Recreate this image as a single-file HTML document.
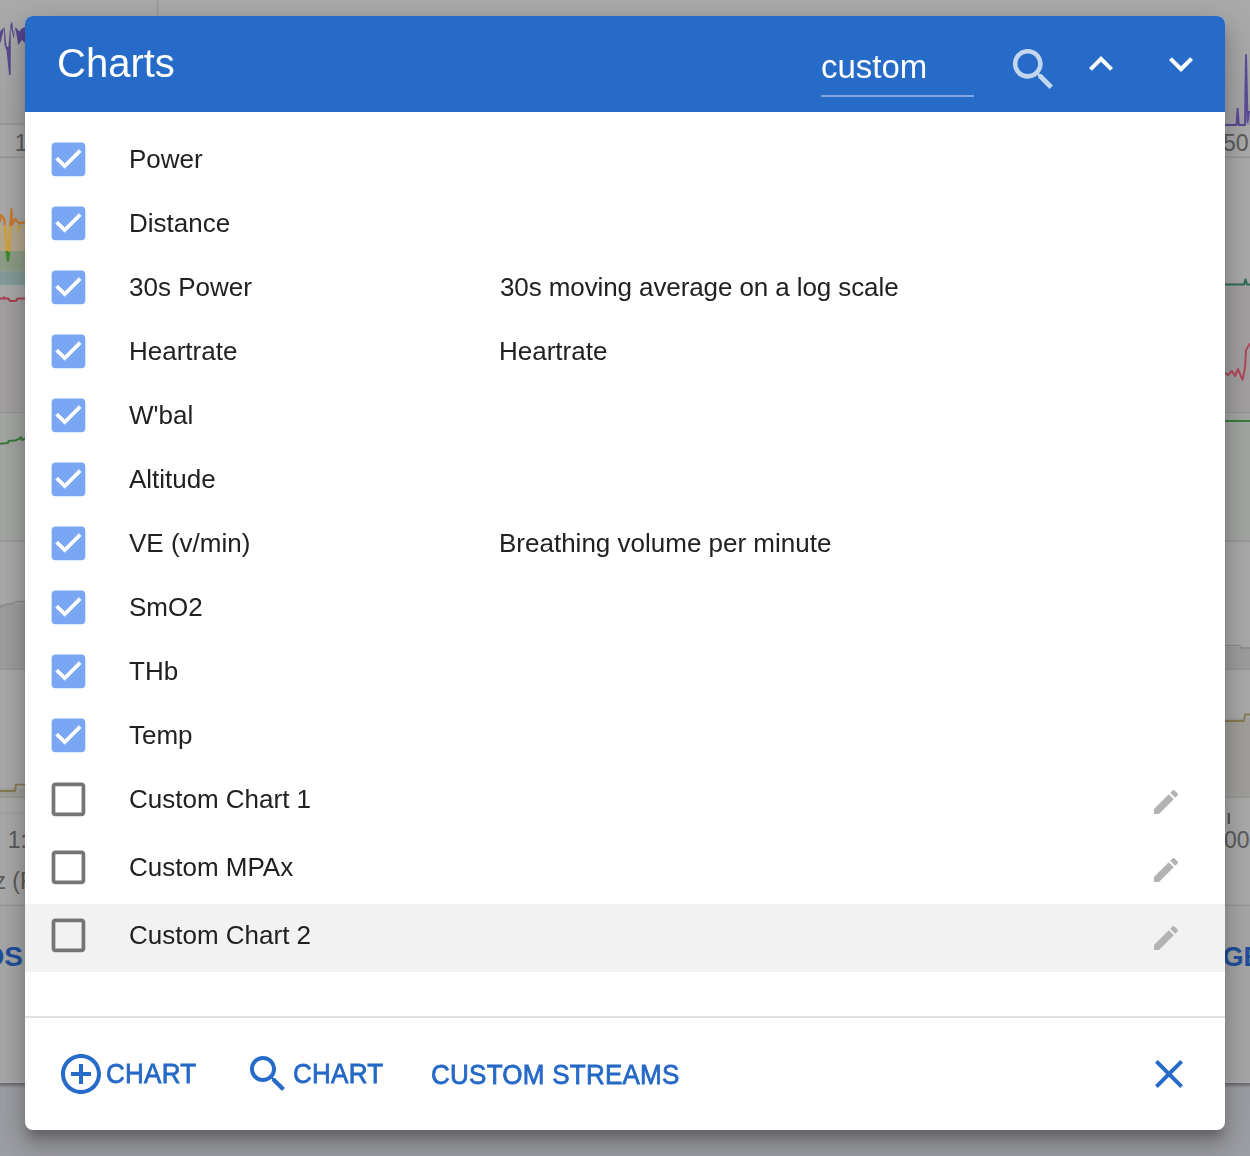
<!DOCTYPE html>
<html><head><meta charset="utf-8">
<style>
html,body{margin:0;padding:0;}
body{width:1250px;height:1156px;overflow:hidden;position:relative;background:#a8a8a8;font-family:"Liberation Sans",sans-serif;}
.a{position:absolute;}
.t{position:absolute;white-space:pre;line-height:1;will-change:transform;}
#dlg{position:absolute;left:25px;top:16px;width:1200px;height:1114px;background:#fff;border-radius:8px;overflow:hidden;
 box-shadow:0 10px 10px -4px rgba(0,0,0,.2),0 16px 20px 2px rgba(0,0,0,.14),0 6px 28px 4px rgba(0,0,0,.12);}
#hdr{position:absolute;left:0;top:0;width:1200px;height:96px;background:#256bc7;}
.lbl{font-size:26px;color:#212121;}
</style></head>
<body>
<div id="bg" class="a" style="left:0;top:0;width:1250px;height:1156px;"><svg class="a" style="left:0;top:0" width="1250" height="1156" viewBox="0 0 1250 1156"><rect x="0" y="0" width="1250" height="1156" fill="#a8a8a8"/><defs><linearGradient id="tg" x1="0" y1="0" x2="0" y2="1"><stop offset="0" stop-color="#aaaaaa"/><stop offset="1" stop-color="#a3a3a5"/></linearGradient></defs><rect x="0" y="0" width="1250" height="124" fill="url(#tg)"/><rect x="0" y="123.5" width="1250" height="1.5" fill="#959595"/><rect x="0" y="156.5" width="1250" height="1.5" fill="#959595"/><rect x="0" y="299" width="25" height="113" fill="#a29fa0"/><rect x="1225" y="286" width="25" height="126" fill="#a29fa0"/><rect x="0" y="412" width="1250" height="1.5" fill="#959595"/><rect x="0" y="413" width="1250" height="128" fill="#a2a5a2"/><rect x="0" y="540.5" width="1250" height="1.5" fill="#959595"/><rect x="0" y="604" width="30" height="65" fill="#9d9d9d"/><rect x="1220" y="647" width="30" height="22" fill="#9d9d9d"/><rect x="0" y="668.5" width="1250" height="1.5" fill="#959595"/><rect x="0" y="788" width="30" height="9" fill="#a09e9b"/><rect x="1220" y="718" width="30" height="79" fill="#a09e9b"/><rect x="0" y="796.5" width="1250" height="1.5" fill="#959595"/><rect x="0" y="812.5" width="25" height="1" fill="#9a9a9a"/><rect x="0" y="905" width="1250" height="178" fill="#a5a5a5"/><rect x="0" y="904.5" width="1250" height="1.5" fill="#979797"/><rect x="0" y="1081.5" width="1250" height="1.5" fill="#adadad"/><rect x="0" y="1083" width="1250" height="80" fill="#9c9da2"/><defs><linearGradient id="bb" x1="0" y1="0" x2="0" y2="1"><stop offset="0" stop-color="#000" stop-opacity=".35"/><stop offset="1" stop-color="#000" stop-opacity="0"/></linearGradient></defs><rect x="0" y="1083" width="1250" height="5" fill="url(#bb)"/><rect x="0" y="225" width="25" height="26" fill="#b3a78f"/><rect x="0" y="251" width="25" height="20.5" fill="#8d9c85"/><rect x="0" y="271.5" width="25" height="13.5" fill="#839b98"/><polygon fill="#58478f" points="0,32.1 1.3,30.1 4.5,27.2 6.5,46.4 8.4,47 10.4,24.9 12,21 13.6,34.7 15.6,27.2 19.5,31.4 21.4,28.8 25,26.9 25,43.1 22.1,39.9 18.2,45.1 15.6,28.8 13.6,38.6 10.7,26.2 10.7,74.9 9.1,74.9 6.5,50.3 4.5,45.1 3.9,28.8 0.6,42.5 0,42.5"/><polyline fill="none" stroke="#5b4a95" stroke-width="2" stroke-linejoin="round" points="1225,125 1236.5,125 1237.6,108.8 1238.8,125 1245,125 1246,55 1247.5,122 1249,112 1250,112"/><polyline fill="none" stroke="#c9782b" stroke-width="2.2" stroke-linejoin="round" points="0,221.8 1.2,215 4.2,218.8 4.8,225.5"/><polyline fill="none" stroke="#d2a12f" stroke-width="2.2" stroke-linejoin="round" points="4.8,225.5 6.1,243 6.7,251"/><polyline fill="none" stroke="#3a8a2c" stroke-width="2.4" stroke-linejoin="round" points="6.7,251 7.9,260.6 9.1,251.5"/><polyline fill="none" stroke="#d2a12f" stroke-width="2.2" stroke-linejoin="round" points="9.1,251.5 10.3,226"/><polyline fill="none" stroke="#c9782b" stroke-width="2.2" stroke-linejoin="round" points="10.3,226 11.5,209 12.1,225 15.2,218.8 18.2,222.4 20.6,223.6 25,221.8"/><polygon fill="#c9a040" points="17,225.5 21,225.5 17.5,234"/><polyline fill="none" stroke="#a8404f" stroke-width="2" stroke-linejoin="round" points="0,298.6 3,298.6 4,297.3 5,298.6 8.5,298.6 10,301 16,301 17.5,298.6 25,298.6"/><polyline fill="none" stroke="#b0485a" stroke-width="2" stroke-linejoin="round" points="1225,372.8 1228,375 1232,371 1235,376 1238,369 1240,374 1242.5,379.8 1245,368 1246,350 1250,343.4"/><polyline fill="none" stroke="#2e6b52" stroke-width="2" stroke-linejoin="round" points="1225,284.6 1244,284.6 1245.5,279.4 1247,284.6 1250,284.6"/><polyline fill="none" stroke="#3c7a3c" stroke-width="2" stroke-linejoin="round" points="0,443.7 8,443 8.5,441 15,440.5 19,439 21,437 22,440 25,438.7"/><polyline fill="none" stroke="#3c7a3c" stroke-width="2" stroke-linejoin="round" points="1225,421 1250,421"/><polyline fill="none" stroke="#8b8b8b" stroke-width="1.5" stroke-linejoin="round" points="0,607 4,606 6,604.5 12,603.5 16,602 25,601.6"/><polyline fill="none" stroke="#8b8b8b" stroke-width="1.5" stroke-linejoin="round" points="1225,645.4 1240,645.4 1241,648 1250,648"/><polyline fill="none" stroke="#857a52" stroke-width="1.8" stroke-linejoin="round" points="0,791 15,791 16,784.7 25,784.7"/><polyline fill="none" stroke="#857a52" stroke-width="1.8" stroke-linejoin="round" points="1225,721 1244,721 1245,714.5 1250,714.5"/><text x="27.5" y="151" font-family="Liberation Sans" font-size="23" font-weight="400" fill="#5a5a5a" text-anchor="end">1</text><text x="1223" y="151" font-family="Liberation Sans" font-size="23" font-weight="400" fill="#5a5a5a" text-anchor="start">50</text><text x="27" y="848" font-family="Liberation Sans" font-size="23" font-weight="400" fill="#5a5a5a" text-anchor="end">1:</text><text x="1224" y="848" font-family="Liberation Sans" font-size="23" font-weight="400" fill="#5a5a5a" text-anchor="start">00</text><rect x="1227.6" y="813" width="2.4" height="11" fill="#5a5a5a"/><text x="34" y="889" font-family="Liberation Sans" font-size="23" font-weight="400" fill="#5a5a5a" text-anchor="end">z (F</text><rect x="156.8" y="0" width="1.5" height="16" fill="#979797"/><text x="23" y="966" font-family="Liberation Sans" font-size="28" font-weight="700" fill="#1f4f9a" text-anchor="end">OS</text><text x="1222.5" y="966" font-family="Liberation Sans" font-size="27" font-weight="700" fill="#1f4f9a" text-anchor="start">GE</text></svg></div>

<div id="dlg">
 <div id="hdr">
  <div class="t" style="left:32px;top:27.2px;font-size:40px;color:#fff;">Charts</div>
  <div class="t" style="left:796px;top:34.3px;font-size:33px;color:#fff;">custom</div>
  <div class="a" style="left:796px;top:79px;width:153px;height:2px;background:#7ea5e0;"></div>
  <svg class="a" style="left:981px;top:26px;" width="55" height="55" viewBox="0 0 24 24"><path fill="#c4d6ee" d="M15.5 14h-.79l-.28-.27C15.41 12.59 16 11.11 16 9.5 16 5.91 13.09 3 9.5 3S3 5.91 3 9.5 5.91 16 9.5 16c1.61 0 3.09-.59 4.23-1.57l.27.28v.79l5 4.99L20.49 19l-4.99-5zm-6 0C7.01 14 5 11.99 5 9.5S7.01 5 9.5 5 14 7.01 14 9.5 11.99 14 9.5 14z"/></svg>
  <svg class="a" style="left:1052px;top:24px;" width="48" height="48" viewBox="0 0 24 24"><path fill="#fff" d="M12 8l-6 6 1.41 1.41L12 10.83l4.59 4.58L18 14z"/></svg>
  <svg class="a" style="left:1132px;top:24px;" width="48" height="48" viewBox="0 0 24 24"><path fill="#fff" d="M16.59 8.59L12 13.17 7.41 8.59 6 10l6 6 6-6z"/></svg>
 </div>
 <!--LIST-->
<div class="a" style="left:0;top:888px;width:1200px;height:68px;background:#f2f2f2;"></div>
<svg class="a" style="left:21.1px;top:120.68px;" width="44.93" height="44.93" viewBox="0 0 24 24"><path fill="#7aa7f4" d="M19 3H5c-1.11 0-2 .9-2 2v14c0 1.1.89 2 2 2h14c1.11 0 2-.9 2-2V5c0-1.1-.89-2-2-2zm-9 14l-5-5 1.41-1.41L10 14.17l7.59-7.59L19 8l-9 9z"/></svg>
<div class="t lbl" style="left:104px;top:130px;">Power</div>
<svg class="a" style="left:21.1px;top:184.68px;" width="44.93" height="44.93" viewBox="0 0 24 24"><path fill="#7aa7f4" d="M19 3H5c-1.11 0-2 .9-2 2v14c0 1.1.89 2 2 2h14c1.11 0 2-.9 2-2V5c0-1.1-.89-2-2-2zm-9 14l-5-5 1.41-1.41L10 14.17l7.59-7.59L19 8l-9 9z"/></svg>
<div class="t lbl" style="left:104px;top:194px;">Distance</div>
<svg class="a" style="left:21.1px;top:248.68px;" width="44.93" height="44.93" viewBox="0 0 24 24"><path fill="#7aa7f4" d="M19 3H5c-1.11 0-2 .9-2 2v14c0 1.1.89 2 2 2h14c1.11 0 2-.9 2-2V5c0-1.1-.89-2-2-2zm-9 14l-5-5 1.41-1.41L10 14.17l7.59-7.59L19 8l-9 9z"/></svg>
<div class="t lbl" style="left:104px;top:258px;">30s Power</div>
<div class="t lbl" style="left:475px;top:258px;letter-spacing:-0.1px;">30s moving average on a log scale</div>
<svg class="a" style="left:21.1px;top:312.68px;" width="44.93" height="44.93" viewBox="0 0 24 24"><path fill="#7aa7f4" d="M19 3H5c-1.11 0-2 .9-2 2v14c0 1.1.89 2 2 2h14c1.11 0 2-.9 2-2V5c0-1.1-.89-2-2-2zm-9 14l-5-5 1.41-1.41L10 14.17l7.59-7.59L19 8l-9 9z"/></svg>
<div class="t lbl" style="left:104px;top:322px;">Heartrate</div>
<div class="t lbl" style="left:474px;top:322px;">Heartrate</div>
<svg class="a" style="left:21.1px;top:376.68px;" width="44.93" height="44.93" viewBox="0 0 24 24"><path fill="#7aa7f4" d="M19 3H5c-1.11 0-2 .9-2 2v14c0 1.1.89 2 2 2h14c1.11 0 2-.9 2-2V5c0-1.1-.89-2-2-2zm-9 14l-5-5 1.41-1.41L10 14.17l7.59-7.59L19 8l-9 9z"/></svg>
<div class="t lbl" style="left:104px;top:386px;">W'bal</div>
<svg class="a" style="left:21.1px;top:440.68px;" width="44.93" height="44.93" viewBox="0 0 24 24"><path fill="#7aa7f4" d="M19 3H5c-1.11 0-2 .9-2 2v14c0 1.1.89 2 2 2h14c1.11 0 2-.9 2-2V5c0-1.1-.89-2-2-2zm-9 14l-5-5 1.41-1.41L10 14.17l7.59-7.59L19 8l-9 9z"/></svg>
<div class="t lbl" style="left:104px;top:450px;">Altitude</div>
<svg class="a" style="left:21.1px;top:504.68px;" width="44.93" height="44.93" viewBox="0 0 24 24"><path fill="#7aa7f4" d="M19 3H5c-1.11 0-2 .9-2 2v14c0 1.1.89 2 2 2h14c1.11 0 2-.9 2-2V5c0-1.1-.89-2-2-2zm-9 14l-5-5 1.41-1.41L10 14.17l7.59-7.59L19 8l-9 9z"/></svg>
<div class="t lbl" style="left:104px;top:514px;">VE (v/min)</div>
<div class="t lbl" style="left:474px;top:514px;">Breathing volume per minute</div>
<svg class="a" style="left:21.1px;top:568.68px;" width="44.93" height="44.93" viewBox="0 0 24 24"><path fill="#7aa7f4" d="M19 3H5c-1.11 0-2 .9-2 2v14c0 1.1.89 2 2 2h14c1.11 0 2-.9 2-2V5c0-1.1-.89-2-2-2zm-9 14l-5-5 1.41-1.41L10 14.17l7.59-7.59L19 8l-9 9z"/></svg>
<div class="t lbl" style="left:104px;top:578px;">SmO2</div>
<svg class="a" style="left:21.1px;top:632.68px;" width="44.93" height="44.93" viewBox="0 0 24 24"><path fill="#7aa7f4" d="M19 3H5c-1.11 0-2 .9-2 2v14c0 1.1.89 2 2 2h14c1.11 0 2-.9 2-2V5c0-1.1-.89-2-2-2zm-9 14l-5-5 1.41-1.41L10 14.17l7.59-7.59L19 8l-9 9z"/></svg>
<div class="t lbl" style="left:104px;top:642px;">THb</div>
<svg class="a" style="left:21.1px;top:696.68px;" width="44.93" height="44.93" viewBox="0 0 24 24"><path fill="#7aa7f4" d="M19 3H5c-1.11 0-2 .9-2 2v14c0 1.1.89 2 2 2h14c1.11 0 2-.9 2-2V5c0-1.1-.89-2-2-2zm-9 14l-5-5 1.41-1.41L10 14.17l7.59-7.59L19 8l-9 9z"/></svg>
<div class="t lbl" style="left:104px;top:706px;">Temp</div>
<svg class="a" style="left:21.1px;top:760.9px;" width="44.93" height="44.93" viewBox="0 0 24 24"><path fill="#757575" d="M19 5v14H5V5h14m0-2H5c-1.1 0-2 .9-2 2v14c0 1.1.9 2 2 2h14c1.1 0 2-.9 2-2V5c0-1.1-.9-2-2-2z"/></svg>
<div class="t lbl" style="left:104px;top:769.7px;">Custom Chart 1</div>
<svg class="a" style="left:1125px;top:769.7px;" width="32" height="32" viewBox="0 0 24 24"><path fill="#b3b3b3" d="M3 17.25V21h3.75L17.81 9.94l-3.75-3.75L3 17.25zM20.71 7.04c.39-.39.39-1.02 0-1.41l-2.34-2.34c-.39-.39-1.02-.39-1.41 0l-1.83 1.83 3.75 3.75 1.83-1.83z"/></svg>
<svg class="a" style="left:21.1px;top:828.9px;" width="44.93" height="44.93" viewBox="0 0 24 24"><path fill="#757575" d="M19 5v14H5V5h14m0-2H5c-1.1 0-2 .9-2 2v14c0 1.1.9 2 2 2h14c1.1 0 2-.9 2-2V5c0-1.1-.9-2-2-2z"/></svg>
<div class="t lbl" style="left:104px;top:837.7px;">Custom MPAx</div>
<svg class="a" style="left:1125px;top:837.7px;" width="32" height="32" viewBox="0 0 24 24"><path fill="#b3b3b3" d="M3 17.25V21h3.75L17.81 9.94l-3.75-3.75L3 17.25zM20.71 7.04c.39-.39.39-1.02 0-1.41l-2.34-2.34c-.39-.39-1.02-.39-1.41 0l-1.83 1.83 3.75 3.75 1.83-1.83z"/></svg>
<svg class="a" style="left:21.1px;top:896.9px;" width="44.93" height="44.93" viewBox="0 0 24 24"><path fill="#757575" d="M19 5v14H5V5h14m0-2H5c-1.1 0-2 .9-2 2v14c0 1.1.9 2 2 2h14c1.1 0 2-.9 2-2V5c0-1.1-.9-2-2-2z"/></svg>
<div class="t lbl" style="left:104px;top:905.7px;">Custom Chart 2</div>
<svg class="a" style="left:1125px;top:905.7px;" width="32" height="32" viewBox="0 0 24 24"><path fill="#b3b3b3" d="M3 17.25V21h3.75L17.81 9.94l-3.75-3.75L3 17.25zM20.71 7.04c.39-.39.39-1.02 0-1.41l-2.34-2.34c-.39-.39-1.02-.39-1.41 0l-1.83 1.83 3.75 3.75 1.83-1.83z"/></svg>
<!--/LIST-->
 <div class="a" style="left:0;top:1000px;width:1200px;height:2px;background:#e0e0e0;"></div>
 <svg class="a" style="left:32px;top:1034px;" width="48" height="48" viewBox="0 0 24 24"><path fill="#256bc7" d="M13 7h-2v4H7v2h4v4h2v-4h4v-2h-4V7zm-1-5C6.48 2 2 6.48 2 12s4.48 10 10 10 10-4.48 10-10S17.52 2 12 2zm0 18c-4.41 0-8-3.59-8-8s3.59-8 8-8 8 3.59 8 8-3.59 8-8 8z"/></svg>
 <div class="t" style="left:80.7px;top:1044.9px;font-size:26px;font-weight:400;color:#2568c6;-webkit-text-stroke:0.75px #2568c6;letter-spacing:0.25px;transform:scaleY(1.06);transform-origin:0 22px;">CHART</div>
 <svg class="a" style="left:219px;top:1034px;" width="48" height="48" viewBox="0 0 24 24"><path fill="#256bc7" d="M15.5 14h-.79l-.28-.27C15.41 12.59 16 11.11 16 9.5 16 5.91 13.09 3 9.5 3S3 5.91 3 9.5 5.91 16 9.5 16c1.61 0 3.09-.59 4.23-1.57l.27.28v.79l5 4.99L20.49 19l-4.99-5zm-6 0C7.01 14 5 11.99 5 9.5S7.01 5 9.5 5 14 7.01 14 9.5 11.99 14 9.5 14z"/></svg>
 <div class="t" style="left:267.8px;top:1044.9px;font-size:26px;font-weight:400;color:#2568c6;-webkit-text-stroke:0.75px #2568c6;letter-spacing:0.25px;transform:scaleY(1.06);transform-origin:0 22px;">CHART</div>
 <div class="t" style="left:406.3px;top:1045.7px;font-size:26px;font-weight:400;color:#2568c6;-webkit-text-stroke:0.75px #2568c6;letter-spacing:0.25px;transform:scaleY(1.06);transform-origin:0 22px;">CUSTOM STREAMS</div>
 <svg class="a" style="left:1120px;top:1034px;" width="48" height="48" viewBox="0 0 24 24"><path fill="#256bc7" d="M19 6.41L17.59 5 12 10.59 6.41 5 5 6.41 10.59 12 5 17.59 6.41 19 12 13.41 17.59 19 19 17.59 13.41 12z"/></svg>
</div>
</body></html>
